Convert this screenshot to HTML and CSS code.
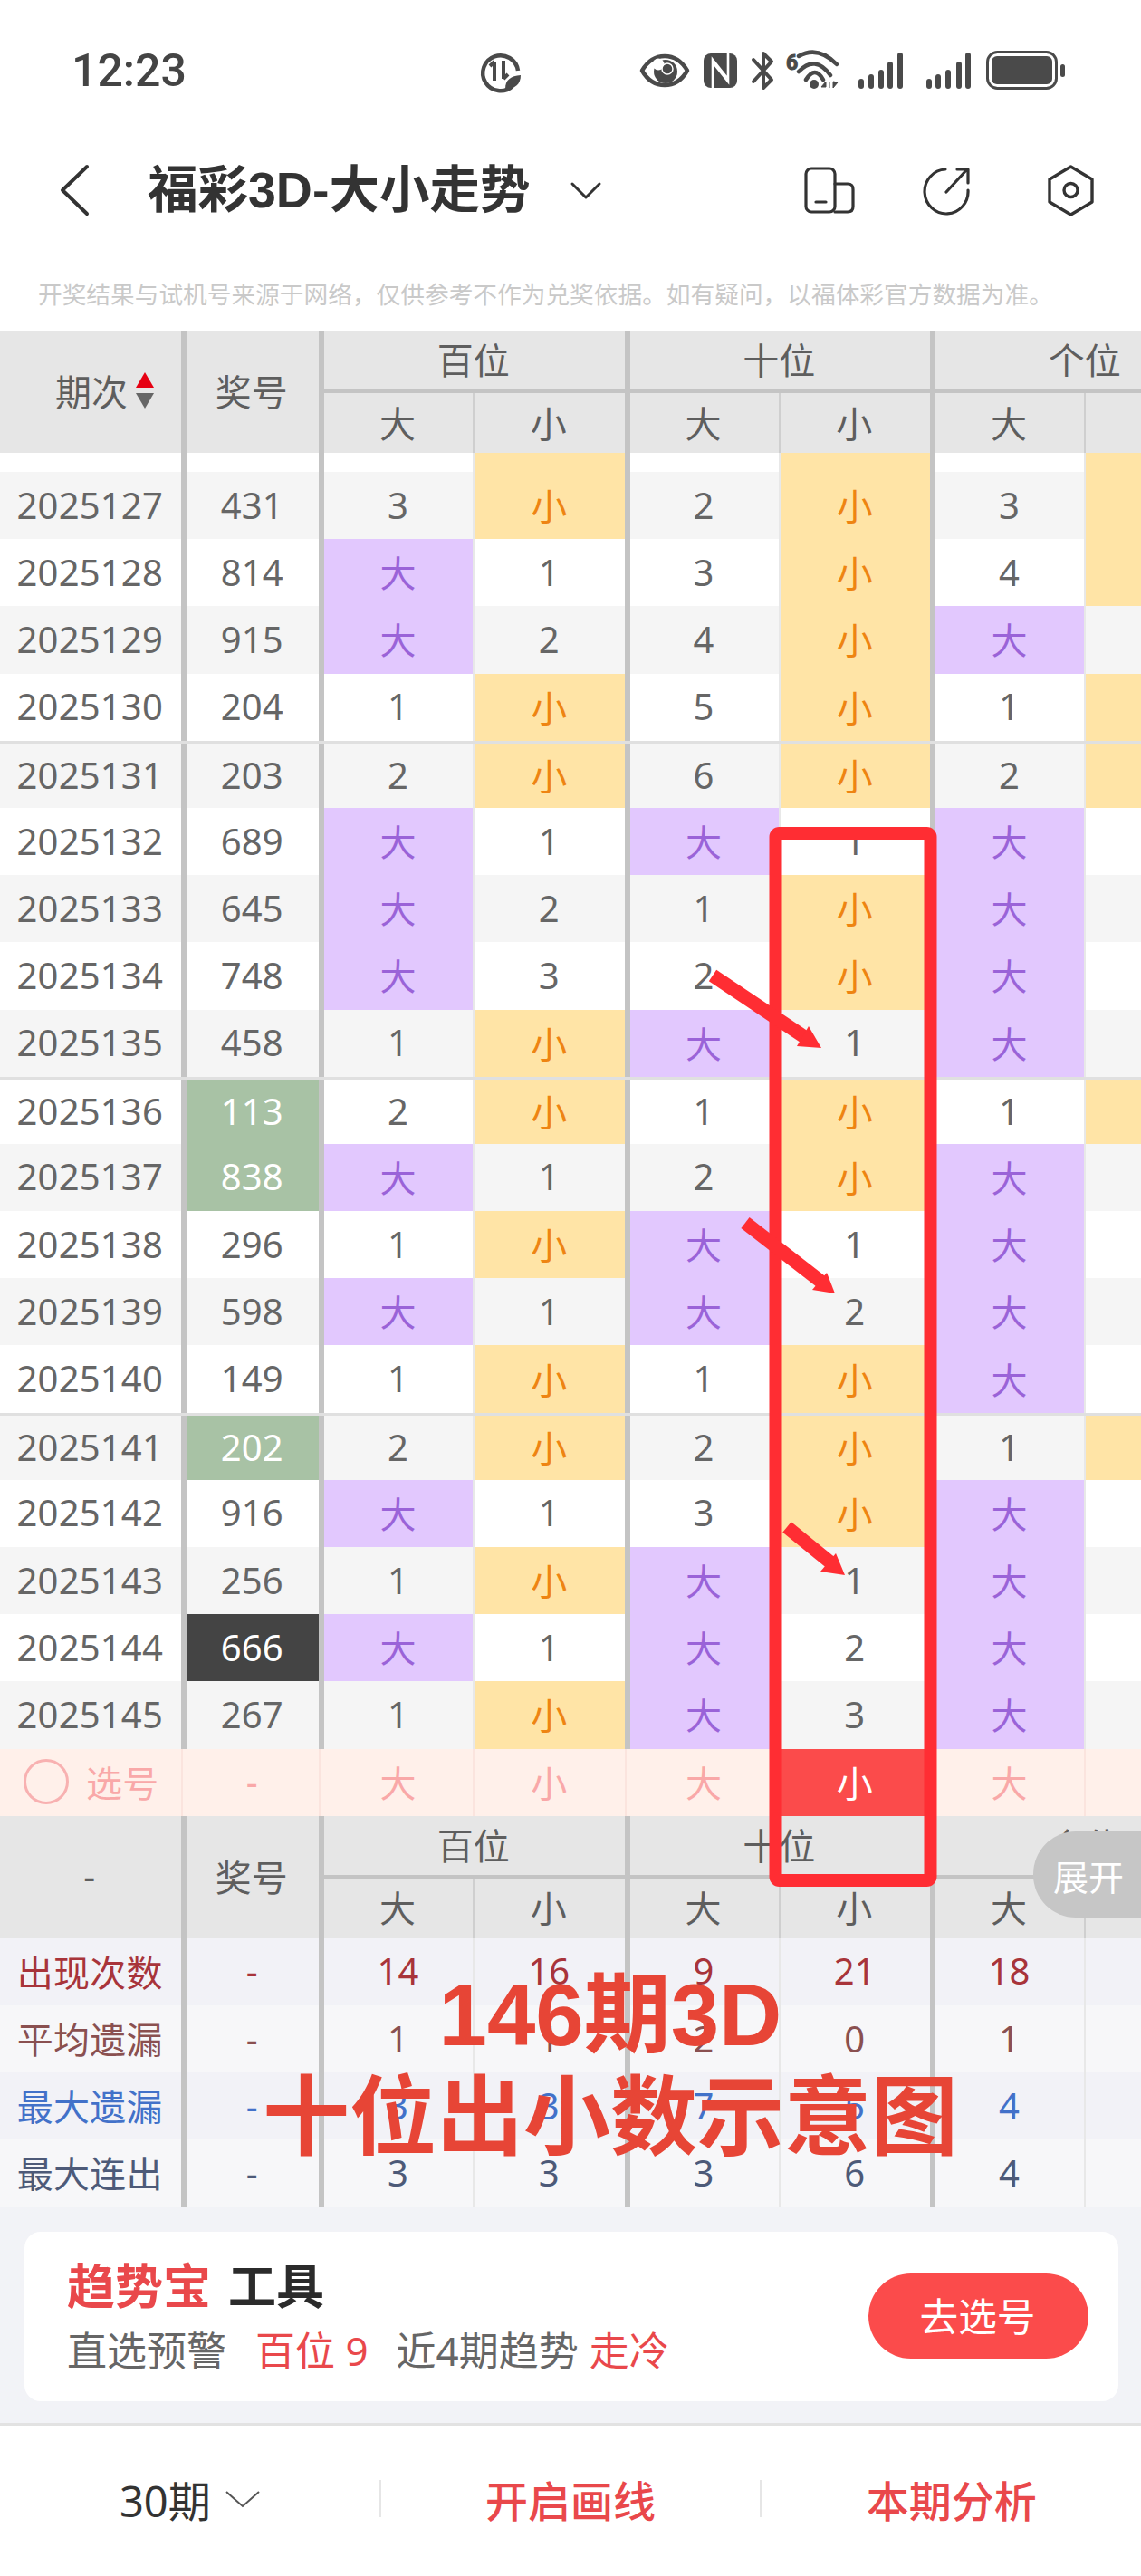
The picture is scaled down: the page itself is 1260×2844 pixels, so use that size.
FILE: index.html
```html
<!DOCTYPE html>
<html lang="zh-CN">
<head>
<meta charset="utf-8">
<title>福彩3D-大小走势</title>
<link rel="stylesheet" href="styles.css">
</head>
<body>
<div class="page">
  <header class="status">
    <span class="time">12:23</span>
    <svg class="ic-alarm" viewBox="525 50 55 55" fill="none" stroke="#4a4a4a">
      <path d="M566 95A19.5 19.5 0 1 1 572 78" stroke-width="4.5"/>
      <path d="M546 89V68M541 73l5-5" stroke-width="4"/>
      <path d="M556 67V87M561 82l-5 5" stroke-width="4"/>
      <path d="M558 98C558 88 564 84 575 83C575 93 569 98 558 98Z" fill="#4a4a4a" stroke="none"/>
    </svg>
    <svg class="ic-sys" viewBox="700 50 480 55" fill="none" stroke="#4a4a4a">
      <path d="M709 78C716 66 725 62 734 62C743 62 752 66 759 78C752 90 743 94 734 94C725 94 716 90 709 78Z" stroke-width="4.5" stroke-linejoin="round"/>
      <circle cx="735" cy="79" r="13" fill="#4a4a4a" stroke="none"/>
      <circle cx="727" cy="71" r="6.5" fill="#fff" stroke="none"/>
      <circle cx="737" cy="76" r="6" fill="#4a4a4a" stroke="#fff" stroke-width="1.5"/>
      <rect x="777" y="59" width="37" height="38" rx="8" fill="#4a4a4a" stroke="none"/>
      <path d="M787 97V66L803 86M804 59V90L788 70" stroke="#fff" stroke-width="2.6"/>
      <path d="M832 90L852 68L843 59V97L852 88L832 66" stroke-width="4" stroke-linejoin="round" stroke-linecap="round"/>
      <text class="svg-six" x="868" y="77">6</text>
      <path d="M882 62Q903 50 924 71M882 79Q900 60 917 83M890 88Q900 72 909 88" stroke-width="4.5" stroke-linecap="round"/>
      <circle cx="899" cy="93" r="5" fill="#4a4a4a" stroke="none"/>
      <path d="M907 96l5-6v6zM916 90v7M920 90v7l5-6z" fill="#4a4a4a" stroke="#4a4a4a" stroke-width="1"/>
      <g fill="#4a4a4a" stroke="none">
        <rect x="948" y="87" width="6" height="11" rx="3"/><rect x="959" y="82" width="6" height="16" rx="3"/><rect x="970" y="77" width="6" height="21" rx="3"/><rect x="980" y="68" width="6" height="30" rx="3"/><rect x="991" y="58" width="6" height="40" rx="3"/>
        <rect x="1023" y="87" width="6" height="11" rx="3"/><rect x="1033" y="82" width="6" height="16" rx="3"/><rect x="1044" y="77" width="6" height="21" rx="3"/><rect x="1056" y="68" width="6" height="30" rx="3"/><rect x="1066" y="58" width="6" height="40" rx="3"/>
        <rect x="1095" y="62" width="67" height="31" rx="6"/>
        <rect x="1171" y="71" width="5" height="14" rx="2.5"/>
      </g>
      <rect x="1090.5" y="57.5" width="76" height="40" rx="11" stroke-width="3"/>
    </svg>
  </header>

  <nav class="nav">
    <svg class="ic-back" viewBox="64 180 36 60" fill="none" stroke="#333"><path d="M96 184L69 210L96 236" stroke-width="4" stroke-linecap="round" stroke-linejoin="round"/></svg>
    <h1 class="title">福彩3D-大小走势</h1>
    <svg class="ic-down" viewBox="628 198 38 26" fill="none" stroke="#333"><path d="M632 204L647 219L662 204" stroke-width="3" stroke-linecap="round" stroke-linejoin="round"/></svg>
    <svg class="ic-device" viewBox="888 185 56 55" fill="none" stroke="#333" stroke-width="3.2" stroke-linecap="round"><rect x="890" y="188" width="32" height="48" rx="6"/><path d="M922 205H936Q942 205 942 211V230Q942 236 936 236H922M901 225H912"/></svg>
    <svg class="ic-share" viewBox="1018 185 55 55" fill="none" stroke="#333" stroke-width="3.2" stroke-linecap="round" stroke-linejoin="round"><path d="M1044 189A24 24.5 0 1 0 1069 212M1045 214L1068 189M1057 189H1069V204"/></svg>
    <svg class="ic-hex" viewBox="1155 183 55 58" fill="none" stroke="#333" stroke-width="3.4" stroke-linejoin="round"><path d="M1182.5 186L1206 200V225L1182.5 239L1159 225V200Z"/><circle cx="1182.5" cy="212" r="7.5"/></svg>
  </nav>

  <p class="note">开奖结果与试机号来源于网络，仅供参考不作为兑奖依据。如有疑问，以福体彩官方数据为准。</p>

  <section class="chart">
    <div class="thead">
      <div class="th th-span th-per">期次<svg class="sort" viewBox="0 0 20 40"><path d="M10 0L20 17H0Z" fill="#e60012"/><path d="M0 23H20L10 40Z" fill="#666"/></svg></div>
      <div class="th th-span">奖号</div>
      <div class="th th-group">百位</div>
      <div class="th th-group">十位</div>
      <div class="th th-group">个位</div>
      <div class="th">大</div><div class="th th-thick">小</div>
      <div class="th">大</div><div class="th th-thick">小</div>
      <div class="th">大</div><div class="th">小</div>
    </div>

    <div class="row row-cut"><div></div><div></div><div></div><div class="x"></div><div></div><div class="x"></div><div></div><div class="x"></div></div>

    <div class="row alt"><div>2025127</div><div>431</div><div>3</div><div class="x">小</div><div>2</div><div class="x">小</div><div>3</div><div class="x">小</div></div>
    <div class="row"><div>2025128</div><div>814</div><div class="d">大</div><div>1</div><div>3</div><div class="x">小</div><div>4</div><div class="x">小</div></div>
    <div class="row alt"><div>2025129</div><div>915</div><div class="d">大</div><div>2</div><div>4</div><div class="x">小</div><div class="d">大</div><div>1</div></div>
    <div class="row"><div>2025130</div><div>204</div><div>1</div><div class="x">小</div><div>5</div><div class="x">小</div><div>1</div><div class="x">小</div></div>
    <div class="row alt group"><div>2025131</div><div>203</div><div>2</div><div class="x">小</div><div>6</div><div class="x">小</div><div>2</div><div class="x">小</div></div>
    <div class="row"><div>2025132</div><div>689</div><div class="d">大</div><div>1</div><div class="d">大</div><div>1</div><div class="d">大</div><div>1</div></div>
    <div class="row alt"><div>2025133</div><div>645</div><div class="d">大</div><div>2</div><div>1</div><div class="x">小</div><div class="d">大</div><div>2</div></div>
    <div class="row"><div>2025134</div><div>748</div><div class="d">大</div><div>3</div><div>2</div><div class="x">小</div><div class="d">大</div><div>3</div></div>
    <div class="row alt"><div>2025135</div><div>458</div><div>1</div><div class="x">小</div><div class="d">大</div><div>1</div><div class="d">大</div><div>4</div></div>
    <div class="row group"><div>2025136</div><div class="g">113</div><div>2</div><div class="x">小</div><div>1</div><div class="x">小</div><div>1</div><div class="x">小</div></div>
    <div class="row alt"><div>2025137</div><div class="g">838</div><div class="d">大</div><div>1</div><div>2</div><div class="x">小</div><div class="d">大</div><div>1</div></div>
    <div class="row"><div>2025138</div><div>296</div><div>1</div><div class="x">小</div><div class="d">大</div><div>1</div><div class="d">大</div><div>2</div></div>
    <div class="row alt"><div>2025139</div><div>598</div><div class="d">大</div><div>1</div><div class="d">大</div><div>2</div><div class="d">大</div><div>3</div></div>
    <div class="row"><div>2025140</div><div>149</div><div>1</div><div class="x">小</div><div>1</div><div class="x">小</div><div class="d">大</div><div>4</div></div>
    <div class="row alt group"><div>2025141</div><div class="g">202</div><div>2</div><div class="x">小</div><div>2</div><div class="x">小</div><div>1</div><div class="x">小</div></div>
    <div class="row"><div>2025142</div><div>916</div><div class="d">大</div><div>1</div><div>3</div><div class="x">小</div><div class="d">大</div><div>1</div></div>
    <div class="row alt"><div>2025143</div><div>256</div><div>1</div><div class="x">小</div><div class="d">大</div><div>1</div><div class="d">大</div><div>2</div></div>
    <div class="row"><div>2025144</div><div class="k">666</div><div class="d">大</div><div>1</div><div class="d">大</div><div>2</div><div class="d">大</div><div>3</div></div>
    <div class="row alt"><div>2025145</div><div>267</div><div>1</div><div class="x">小</div><div class="d">大</div><div>3</div><div class="d">大</div><div>4</div></div>

    <div class="row pick">
      <div class="pick-label"><span class="ring"></span>选号</div><div>-</div><div>大</div><div>小</div><div>大</div><div class="on">小</div><div>大</div><div>小</div>
    </div>

    <div class="thead">
      <div class="th th-span">-</div>
      <div class="th th-span">奖号</div>
      <div class="th th-group">百位</div>
      <div class="th th-group">十位</div>
      <div class="th th-group">个位</div>
      <div class="th">大</div><div class="th th-thick">小</div>
      <div class="th">大</div><div class="th th-thick">小</div>
      <div class="th">大</div><div class="th">小</div>
    </div>

    <div class="row stat s-red"><div>出现次数</div><div>-</div><div>14</div><div>16</div><div>9</div><div>21</div><div>18</div><div>12</div></div>
    <div class="row stat alt2 s-brown"><div>平均遗漏</div><div>-</div><div>1</div><div>1</div><div>2</div><div>0</div><div>1</div><div>1</div></div>
    <div class="row stat s-blue"><div>最大遗漏</div><div>-</div><div>3</div><div>3</div><div>7</div><div>5</div><div>4</div><div>3</div></div>
    <div class="row stat alt2 s-slate"><div>最大连出</div><div>-</div><div>3</div><div>3</div><div>3</div><div>6</div><div>4</div><div>3</div></div>
  </section>

  <section class="tool-wrap">
    <div class="tool">
      <div class="tool-text">
        <div class="tool-title"><span class="red">趋势宝</span><span class="tool-name">工具</span></div>
        <div class="tool-line"><span>直选预警</span><span class="red gap-a">百位 9</span><span class="gap-b">近4期趋势</span><span class="red gap-c">走冷</span></div>
      </div>
      <button class="go">去选号</button>
    </div>
  </section>

  <footer class="bar">
    <div class="bar-item">30期<svg class="ic-bar-down" viewBox="0 0 38 20" fill="none" stroke="#555"><path d="M1 2L19 18L37 2" stroke-width="2"/></svg></div>
    <span class="sep"></span>
    <div class="bar-item red">开启画线</div>
    <span class="sep"></span>
    <div class="bar-item red">本期分析</div>
  </footer>

  <svg class="marks" viewBox="0 0 1260 2844" fill="none">
    <rect x="856.5" y="920" width="171" height="1156" rx="4" stroke="#ff2d33" stroke-width="14"/>
    <g stroke="#ff2d33" stroke-width="15">
      <path d="M787 1077L893 1148"/>
      <path d="M823 1350L908 1416"/>
      <path d="M869 1686L922 1729"/>
    </g>
    <g fill="#ff2d33">
      <path d="M907 1157L893 1133L880 1155Z"/>
      <path d="M922 1428L913 1405L897 1424Z"/>
      <path d="M933 1739L923 1715L906 1735Z"/>
    </g>
  </svg>

  <div class="caption"><div>146期3D</div><div>十位出小数示意图</div></div>
  <div class="expand">展开</div>
</div>
</body>
</html>
```
FILE: styles.css
```css
* { box-sizing: border-box; }
html, body { margin: 0; padding: 0; background: #fff; }
body { font-family: "Noto Sans", "Noto Sans CJK SC", sans-serif; }
.page { position: relative; width: 1260px; height: 2844px; overflow: hidden; }
.red { color: #e9484b; }

/* status bar */
.status { height: 120px; display: flex; align-items: flex-start; padding-top: 50px; position: relative; }
.time { margin-left: 79px; width: 446px; font: 500 50px/56px Roboto, sans-serif; color: #444; }
.ic-alarm { width: 55px; height: 55px; }
.ic-sys { width: 480px; height: 55px; margin-left: 120px; }
.svg-six { font: 700 23px Roboto, sans-serif; fill: #4a4a4a; }

/* nav */
.nav { height: 180px; display: flex; align-items: center; }
.ic-back { width: 36px; height: 60px; margin-left: 64px; }
.title { margin: 0 0 0 63px; width: 465px; font-size: 55.5px; line-height: 60px; font-weight: 700; color: #333; font-family: "Liberation Sans", "Noto Sans CJK SC", sans-serif; white-space: nowrap; }
.ic-down { width: 38px; height: 26px; }
.ic-device { width: 56px; height: 55px; margin-left: 222px; }
.ic-share { width: 55px; height: 55px; margin-left: 74px; }
.ic-hex { width: 55px; height: 58px; margin-left: 82px; }

.note { margin: 0; height: 65px; padding: 6px 0 0 42px; font-size: 26.7px; line-height: 38px; color: #c9c9c9; white-space: nowrap; }

/* chart */
.chart { width: 1260px; overflow: hidden; }
.thead, .row { display: grid; width: 1370.5px; grid-template-columns: 205.5px 152.5px 166px 171.5px 166px 171.5px 166px 171.5px; }
.thead { grid-template-rows: 69px 66px; background: #e6e6e6; color: #5e5e5e; font-size: 40px; }
.th { display: flex; align-items: center; justify-content: center; border-right: 2px solid #cfcfcf; padding: 0 2px 3px 0; }
.th-span { grid-row: 1 / 3; border-right: 6px solid #c4c4c4; }
.th-group { grid-column: span 2; border-right: 6px solid #c4c4c4; border-bottom: 4px solid #c4c4c4; }
.th-thick { border-right: 6px solid #c4c4c4; }
.th-per { justify-content: flex-start; padding-left: 61px; }
.sort { width: 20px; height: 40px; margin-left: 9px; }

.row { height: 74.2px; background: #fff; color: #666; font-size: 40px; }
.row.alt { background: #f5f5f5; }
.row.group { border-top: 3px solid #e0e0e0; }
.row-cut { height: 21px; }
.row > div { display: flex; align-items: center; justify-content: center; border-right: 2px solid #e8e8e8; white-space: nowrap; padding: 0 1px 2px 0; letter-spacing: .2px; }
.row > div:nth-child(-n+2), .row > div:nth-child(4), .row > div:nth-child(6) { border-right: 6px solid #c4c4c4; }
.row > .d { background: #e2c8fe; color: #9a63d8; }
.row > .x { background: #ffe4a6; color: #ee8412; }
.row > .g { background: #a8c2a5; color: #fff; }
.row > .k { background: #444; color: #fff; }

.row.pick { background: #fff0ea; color: #f9a8a8; }
.row.pick > div { border-right-color: #fbe4de; }
.row.pick > div:nth-child(-n+2), .row.pick > div:nth-child(4), .row.pick > div:nth-child(6) { border-right: 2px solid #fbe4de; width: calc(100% - 4px); }
.row.pick > .on { background: #fb4b4b; color: #fff; }
.row.pick > .pick-label { justify-content: flex-start; padding-left: 26px; }
.ring { width: 50px; height: 50px; border-radius: 50%; border: 3px solid #f8b1b1; margin-right: 19px; flex: none; }

.stat { background: #f2f2f7; }
.stat.alt2 { background: #f7f7f9; }
.s-red { color: #a8343a; }
.s-brown { color: #8a5050; }
.s-blue { color: #4271c9; }
.s-slate { color: #4d5a78; }

/* tool card */
.tool-wrap { height: 241px; background: #f2f3f7; padding: 27px 25px 0 27px; border-bottom: 3px solid #e2e2e2; }
.tool { height: 187px; background: #fff; border-radius: 18px; display: flex; align-items: center; justify-content: space-between; padding: 0 33px 0 47px; }
.tool-title { font-size: 53px; line-height: 66px; font-weight: 700; }
.tool-name { color: #2b2b2b; margin-left: 19px; }
.tool-line { font-size: 44px; line-height: 58px; color: #666; margin-top: 9px; white-space: nowrap; }
.gap-a { margin-left: 32px; }
.gap-b { margin-left: 31px; }
.gap-c { margin-left: 12px; }
.go { width: 243px; height: 94px; border: 0; border-radius: 47px; background: #fb4b4b; color: #fff; font: 42.7px "Noto Sans CJK SC", sans-serif; padding: 0 2px 4px 0; }

/* bottom bar */
.bar { height: 166px; display: flex; align-items: center; font-size: 47px; color: #333; padding-bottom: 4px; }
.bar-item { flex: 1; display: flex; align-items: center; justify-content: center; font-weight: 500; }
.bar-item:first-child { font-weight: 400; }
.sep { width: 2px; height: 41px; background: #e6e6e6; }
.ic-bar-down { width: 38px; height: 20px; margin-left: 16px; }

/* overlays */
.marks { position: absolute; left: 0; top: 0; width: 1260px; height: 2844px; pointer-events: none; }
.caption { position: absolute; left: 0; top: 2168px; width: 1348px; display: flex; flex-direction: column; align-items: center; color: #e74536; font-family: "Liberation Sans", "Noto Sans CJK SC", sans-serif; font-weight: 700; font-size: 96px; line-height: 113px; white-space: nowrap; }
.expand { position: absolute; right: 0; top: 2022px; width: 119px; height: 95px; border-radius: 47px 0 0 47px; background: #c6c6c6; color: #fff; font-size: 39px; display: flex; align-items: center; justify-content: flex-end; padding-right: 19px; }
```
